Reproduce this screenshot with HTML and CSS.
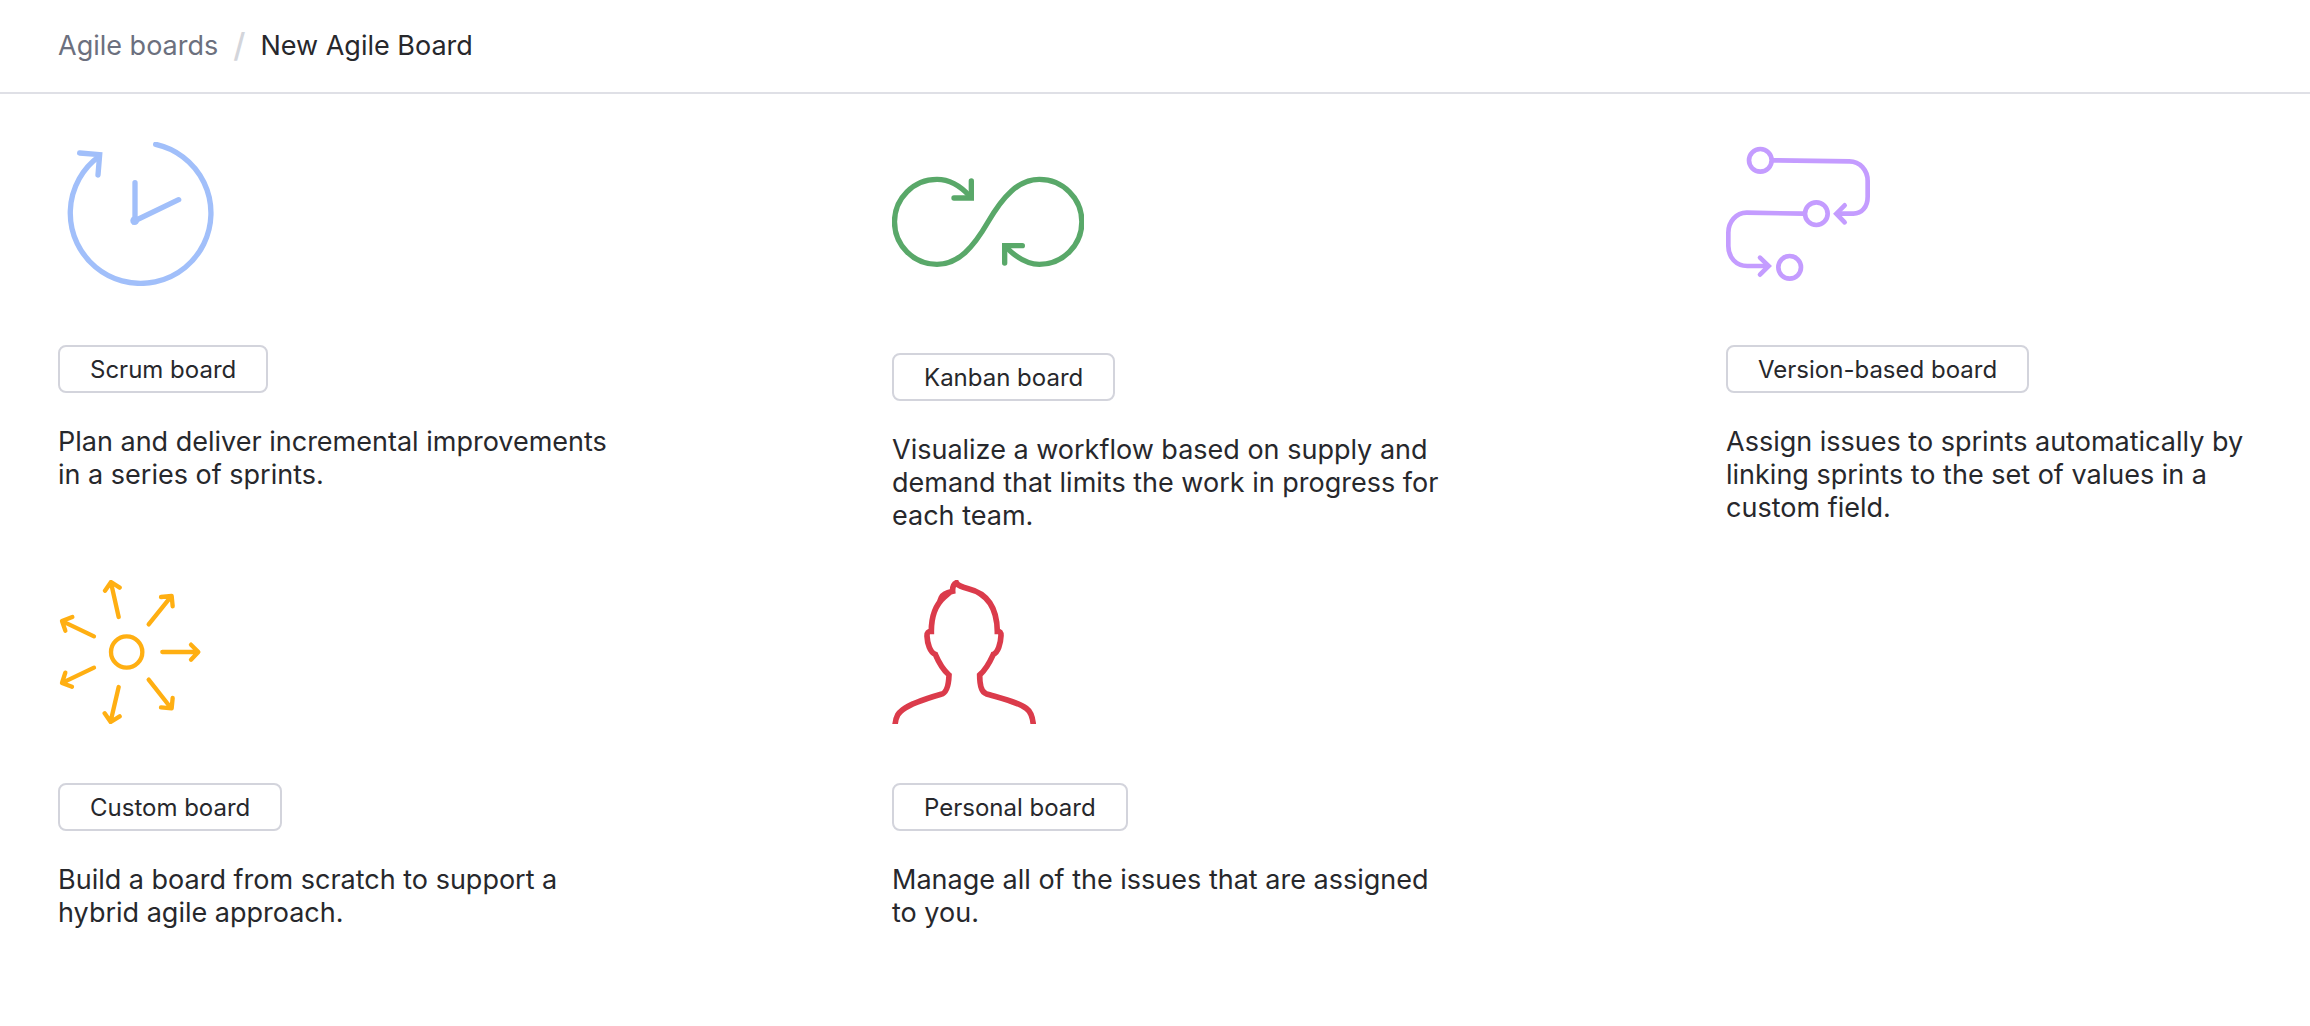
FILE: index.html
```html
<!DOCTYPE html>
<html lang="en">
<head>
    <meta charset="UTF-8">
    <meta name="viewport" content="width=device-width, initial-scale=1.0">
    <title>New Agile Board</title>
    <link rel="stylesheet" href="styles.css">
</head>
<body>
    <header class="header">
        <nav class="breadcrumbs" aria-label="Breadcrumb">
            <a class="crumb-link" href="#">Agile boards</a>
            <span class="separator">/</span>
            <h1 class="crumb-current">New Agile Board</h1>
        </nav>
    </header>

    <main class="board-types">
        <section class="board-type">
            <svg class="board-icon scrum" width="160" height="144" viewBox="24 36 480 432" aria-hidden="true">
                <path d="M317 43A211 211 0 1 1 147 79"/>
                <path d="M89 69L149 74L144 135"/>
                <path d="M255 158V272L386 209"/>
                <circle class="dot" cx="254" cy="272" r="13"/>
            </svg>
            <button class="board-button" type="button">Scrum board</button>
            <p class="description">Plan and deliver incremental improvements in a series of sprints.</p>
        </section>

        <section class="board-type">
            <svg class="board-icon kanban" width="192" height="152" viewBox="36 -54 576 456" aria-hidden="true">
                <path d="M270 109C240 76 210 58 171 58A127 127 0 0 0 171 313C235 313 280 262 324 186C368 110 415 58 478 58A127 127 0 0 1 478 313C440 313 408 292 378 261"/>
                <path d="M222 114H274V63"/>
                <path d="M374 309V257H427"/>
            </svg>
            <button class="board-button" type="button">Kanban board</button>
            <p class="description">Visualize a workflow based on supply and demand that limits the work in progress for each team.</p>
        </section>

        <section class="board-type">
            <svg class="board-icon version" width="144" height="144" viewBox="48 36 432 432" aria-hidden="true">
                <circle cx="151" cy="91" r="34"/>
                <circle cx="319" cy="251" r="34"/>
                <circle cx="239" cy="412" r="34"/>
                <path d="M190 91L418 94C450 94 473 121 473 153V200C473 231 455 251 430 251H383"/>
                <path d="M404 226L379 251L404 277"/>
                <path d="M280 251L110 248C78 248 55 276 55 308V348C55 382 78 408 112 408H172"/>
                <path d="M150 383L176 408L150 434"/>
            </svg>
            <button class="board-button" type="button">Version-based board</button>
            <p class="description">Assign issues to sprints automatically by linking sprints to the set of values in a custom field.</p>
        </section>

        <section class="board-type">
            <svg class="board-icon custom" width="144" height="144" viewBox="24 45 432 432" aria-hidden="true">
                <circle cx="230" cy="261" r="47"/>
                <path d="M337 261H443M423 239L445 261L423 284"/>
                <path d="M296 178L363 95M333 96L365 93L368 124"/>
                <path d="M206 156L183 53M165 77L183 51L209 68"/>
                <path d="M132 214L38 169M67 156L36 168L46 197"/>
                <path d="M132 308L38 353M46 323L36 354L66 365"/>
                <path d="M206 366L182 469M164 445L182 471L209 454"/>
                <path d="M296 344L363 429M333 427L365 430L368 399"/>
            </svg>
            <button class="board-button" type="button">Custom board</button>
            <p class="description">Build a board from scratch to support a hybrid agile approach.</p>
        </section>

        <section class="board-type">
            <svg class="board-icon personal" width="144" height="144" viewBox="36 45 432 432" aria-hidden="true">
                <path d="M45 480C48 452 56 443 68 434C97 413 145 399 183 388C200 384 206 362 207 330C190 315 177 294 166 268C150 263 142 235 141 213C141 202 144 199 154 199C154 156 166 120 192 97L184 98C188 88 197 84 218 79C217 64 223 56 229 53C233 62 246 66 265 71C322 85 351 130 352 199C361 199 363 202 363 212C362 235 354 263 340 268C330 290 314 317 299 330C299 360 304 381 318 386C354 397 408 408 439 430C453 440 458 455 460 480"/>
            </svg>
            <button class="board-button" type="button">Personal board</button>
            <p class="description">Manage all of the issues that are assigned to you.</p>
        </section>
    </main>
</body>
</html>
```

FILE: styles.css
```css
* {
    margin: 0;
    padding: 0;
    box-sizing: border-box;
}

body {
    font-family: Inter, "Liberation Sans", sans-serif;
    font-size: 27px;
    line-height: 33px;
    background: #fff;
    color: #27282c;
}

.header {
    padding: 29px 58px 30px;
    border-bottom: 2px solid #dfe0e6;
}

.breadcrumbs {
    display: flex;
    align-items: center;
    gap: 15px;
}

.crumb-link {
    color: #6c707e;
    text-decoration: none;
}

.crumb-link:hover {
    text-decoration: underline;
}

.separator {
    font-size: 33px;
    font-weight: 500;
    color: #d3d5db;
}

.crumb-current {
    font-size: 27px;
    font-weight: 400;
}

.board-types {
    display: grid;
    grid-template-columns: repeat(3, 1fr);
    gap: 48px 258px;
    padding: 48px 8px 48px 58px;
}

.board-type {
    display: flex;
    flex-direction: column;
    align-items: flex-start;
}

.board-icon {
    display: block;
    margin-bottom: 59px;
    fill: none;
    stroke: currentColor;
    stroke-width: 16;
    stroke-linecap: round;
}

.scrum {
    color: #a1bffa;
}

.scrum .dot {
    fill: currentColor;
    stroke: none;
}

.kanban {
    color: #59a869;
}

.version {
    color: #c49cff;
    stroke-width: 14;
}

.custom {
    color: #ffaf12;
    stroke-width: 13;
    stroke-linejoin: round;
}

.personal {
    color: #db3b4b;
    stroke-width: 17;
}

.board-button {
    height: 48px;
    margin-bottom: 32px;
    padding: 0 30px;
    font-family: inherit;
    font-size: 24px;
    color: inherit;
    background: #fff;
    border: 2px solid #d3d4dc;
    border-radius: 8px;
    cursor: pointer;
}

.board-button:hover {
    border-color: #a1bffa;
}

.description {
    padding-right: 16px;
}
```
